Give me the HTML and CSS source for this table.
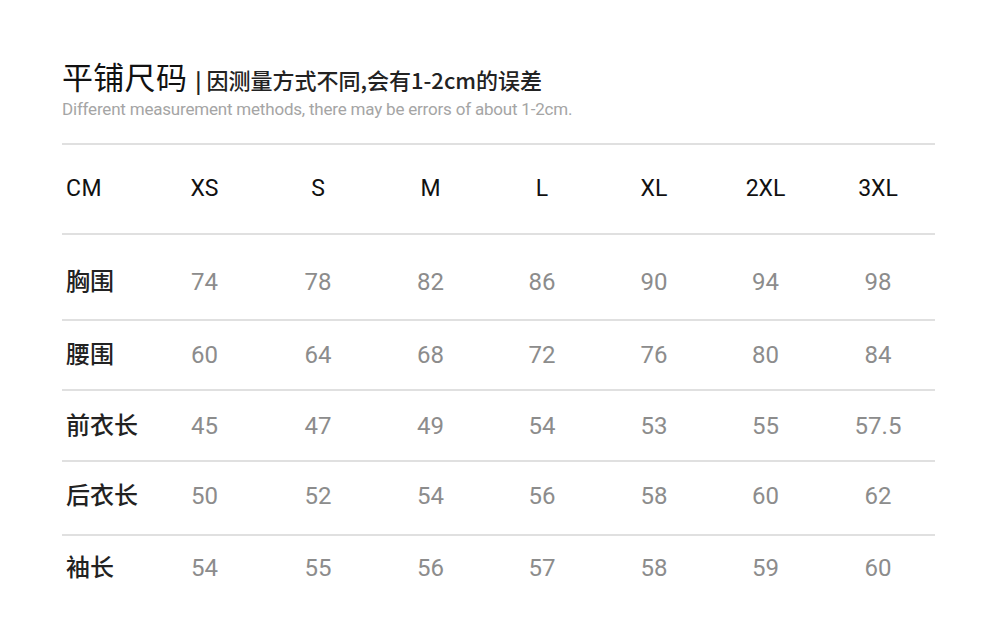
FILE: index.html
```html
<!DOCTYPE html>
<html lang="zh">
<head>
<meta charset="utf-8">
<link rel="stylesheet" href="styles.css">
</head>
<body>
<div class="page">
  <div class="heading">
    <span class="title">平铺尺码</span>
    <span class="bar">|</span>
    <span class="note">因测量方式不同,会有1-2cm的误差</span>
  </div>
  <div class="sub">Different measurement methods, there may be errors of about 1-2cm.</div>

  <div class="table">
    <div class="row head">
      <div class="label">CM</div><div>XS</div><div>S</div><div>M</div><div>L</div><div>XL</div><div>2XL</div><div>3XL</div>
    </div>
    <div class="row r1">
      <div class="label">胸围</div><div>74</div><div>78</div><div>82</div><div>86</div><div>90</div><div>94</div><div>98</div>
    </div>
    <div class="row r2">
      <div class="label">腰围</div><div>60</div><div>64</div><div>68</div><div>72</div><div>76</div><div>80</div><div>84</div>
    </div>
    <div class="row r3">
      <div class="label">前衣长</div><div>45</div><div>47</div><div>49</div><div>54</div><div>53</div><div>55</div><div>57.5</div>
    </div>
    <div class="row r4">
      <div class="label">后衣长</div><div>50</div><div>52</div><div>54</div><div>56</div><div>58</div><div>60</div><div>62</div>
    </div>
    <div class="row r5">
      <div class="label">袖长</div><div>54</div><div>55</div><div>56</div><div>57</div><div>58</div><div>59</div><div>60</div>
    </div>
  </div>
</div>
</body>
</html>
```

FILE: styles.css
```css
html, body {
  margin: 0;
  padding: 0;
  background: #fff;
}
body {
  font-family: Roboto, "Noto Sans CJK SC", sans-serif;
  color: #1a1a1a;
}
.page {
  width: 1000px;
  height: 625px;
  padding: 55px 0 0 62px;
  box-sizing: border-box;
}
.heading {
  display: flex;
  align-items: baseline;
  height: 42px;
}
.title {
  font-family: "Noto Sans CJK SC", sans-serif;
  font-size: 31px;
  font-weight: 400;
  color: #111;
  line-height: 42px;
  letter-spacing: 0.3px;
}
.bar {
  font-family: "Noto Sans CJK SC", sans-serif;
  font-size: 21px;
  font-weight: 700;
  margin: 0 5px 0 8px;
  color: #222;
}
.note {
  font-family: "Noto Sans CJK SC", sans-serif;
  font-size: 22px;
  font-weight: 500;
  color: #222;
  letter-spacing: 0;
}
.sub {
  font-family: Roboto, sans-serif;
  font-size: 17px;
  color: #a5a5a5;
  line-height: 20px;
  margin-top: 2px;
  letter-spacing: -0.2px;
}
.table {
  width: 873px;
  margin-top: 24px;
  border-top: 2px solid #e0e0e0;
}
.row {
  display: grid;
  grid-template-columns: 86px 113px 114px 111px 112px 112px 111px 114px;
  align-items: center;
  box-sizing: border-box;
  font-size: 24px;
  line-height: 28px;
  color: #8c8c8c;
  text-align: center;
  border-bottom: 2px solid #e0e0e0;
}
.row .label {
  text-align: left;
  padding-left: 4px;
  font-family: "Noto Sans CJK SC", sans-serif;
  font-weight: 500;
  color: #222;
  line-height: 24px;
  margin-top: -4px;
}
.head {
  height: 90px;
  color: #111;
  font-size: 23px;
  font-weight: 400;
}
.head .label {
  font-family: Roboto, sans-serif;
  font-weight: 400;
  color: #111;
  letter-spacing: 0.5px;
  margin-top: 0;
}
.r1 { height: 86px; padding-top: 10px; }
.r2 { height: 70px; }
.r3 { height: 71px; }
.r4 { height: 74px; padding-bottom: 4px; }
.r5 { height: 64px; border-bottom: none; }
```
